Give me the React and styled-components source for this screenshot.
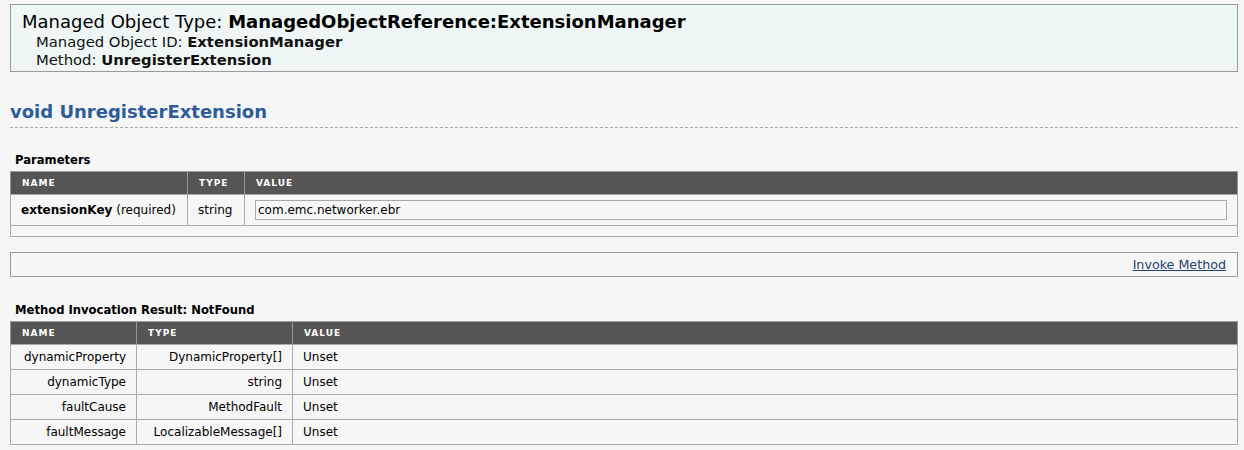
import React from 'react';
import styled, { createGlobalStyle } from 'styled-components';

const GlobalStyle = createGlobalStyle`
  body {
    margin: 0;
    background: #f6f6f6;
    font-family: 'DejaVu Sans', Verdana, sans-serif;
    color: #000;
  }
`;

const Page = styled.div`
  width: 1228px;
  padding: 4px 6px 10px 10px;
`;

const ObjectBox = styled.div`
  border: 1px solid #999;
  background: #eef7f5;
  padding: 6px 11px 2px;
`;

const ObjectTitle = styled.div`
  font-size: 18px;
  line-height: 22px;
`;

const ObjectLine = styled.div`
  font-size: 14.8px;
  line-height: 18px;
  padding-left: 14px;
  color: #111;
`;

const MethodHeading = styled.h1`
  margin: 29px 0 0;
  font-size: 18px;
  line-height: 22px;
  color: #2e5c99;
  font-weight: bold;
  padding-bottom: 4px;
  border-bottom: 1px dashed #aaa;
`;

const SectionLabel = styled.div`
  margin: ${(p) => p.top || 25}px 0 ${(p) => p.bottom || 4}px 5px;
  font-size: 11.6px;
  line-height: 14px;
  font-weight: bold;
`;

const Table = styled.table`
  width: 100%;
  border-collapse: collapse;
  border: 1px solid #999;
  table-layout: fixed;
  font-size: 12px;
`;

const Th = styled.th`
  background: #555;
  color: #fff;
  font-size: 9px;
  letter-spacing: 1px;
  text-transform: uppercase;
  text-align: left;
  font-weight: bold;
  height: 22px;
  padding: 0 0 0 11px;
  border-left: 1px solid #999;
  &:first-child {
    border-left: none;
  }
`;

const Td = styled.td`
  height: ${(p) => p.h || 24}px;
  padding: 0 10px;
  border: 1px solid #aaa;
  text-align: ${(p) => p.align || 'left'};
  vertical-align: middle;
`;

const ValueInput = styled.input`
  display: block;
  width: 100%;
  box-sizing: border-box;
  height: 20px;
  margin-top: -1px;
  border: 1px solid #aaa;
  background: #f7f7f7;
  font-family: 'DejaVu Sans', Verdana, sans-serif;
  font-size: 12px;
  padding: 0 2px;
  color: #000;
`;

const InvokeBar = styled.div`
  margin-top: 15px;
  border: 1px solid #999;
  height: 23px;
  display: flex;
  align-items: center;
  justify-content: flex-end;
  padding-right: 11px;
`;

const InvokeLink = styled.a`
  font-size: 12.7px;
  color: #1f3f6e;
  text-decoration: underline;
  cursor: pointer;
`;

const results = [
  { name: 'dynamicProperty', type: 'DynamicProperty[]', value: 'Unset' },
  { name: 'dynamicType', type: 'string', value: 'Unset' },
  { name: 'faultCause', type: 'MethodFault', value: 'Unset' },
  { name: 'faultMessage', type: 'LocalizableMessage[]', value: 'Unset' },
];

function App() {
  return (
    <Page>
      <GlobalStyle />
      {/* Object info */}
      <ObjectBox>
        <ObjectTitle>
          Managed Object Type: <b>ManagedObjectReference:ExtensionManager</b>
        </ObjectTitle>
        <ObjectLine>
          Managed Object ID: <b>ExtensionManager</b>
        </ObjectLine>
        <ObjectLine>
          Method: <b>UnregisterExtension</b>
        </ObjectLine>
      </ObjectBox>

      <MethodHeading>void UnregisterExtension</MethodHeading>

      {/* Parameters */}
      <SectionLabel>Parameters</SectionLabel>
      <Table>
        <colgroup>
          <col style={{ width: 177 }} />
          <col style={{ width: 57 }} />
          <col />
        </colgroup>
        <thead>
          <tr>
            <Th>Name</Th>
            <Th>Type</Th>
            <Th>Value</Th>
          </tr>
        </thead>
        <tbody>
          <tr>
            <Td h={30}>
              <b>extensionKey</b> (required)
            </Td>
            <Td h={30}>string</Td>
            <Td h={30}>
              <ValueInput defaultValue="com.emc.networker.ebr" />
            </Td>
          </tr>
          <tr>
            <Td h={10} colSpan={3} />
          </tr>
        </tbody>
      </Table>

      <InvokeBar>
        <InvokeLink>Invoke Method</InvokeLink>
      </InvokeBar>

      {/* Result */}
      <SectionLabel top={26}>Method Invocation Result: NotFound</SectionLabel>
      <Table>
        <colgroup>
          <col style={{ width: 126 }} />
          <col style={{ width: 156 }} />
          <col />
        </colgroup>
        <thead>
          <tr>
            <Th>Name</Th>
            <Th>Type</Th>
            <Th>Value</Th>
          </tr>
        </thead>
        <tbody>
          {results.map((r) => (
            <tr key={r.name}>
              <Td align="right">{r.name}</Td>
              <Td align="right">{r.type}</Td>
              <Td>{r.value}</Td>
            </tr>
          ))}
        </tbody>
      </Table>
    </Page>
  );
}

export default App;
